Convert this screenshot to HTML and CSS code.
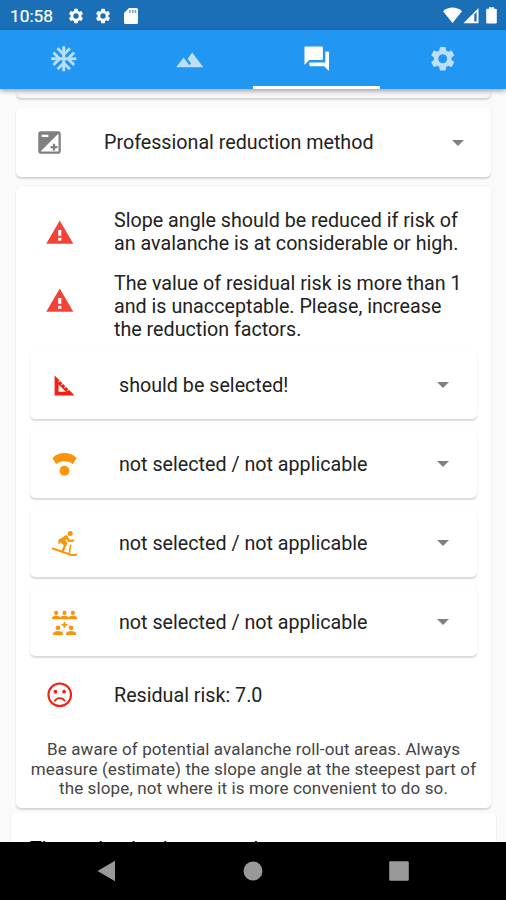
FILE: index.html
```html
<!DOCTYPE html>
<html lang="en">
<head>
<meta charset="utf-8">
<title>Avalanche risk</title>
<link rel="stylesheet" href="styles.css">
</head>
<body>
<svg class="defs" aria-hidden="true">
  <symbol id="gear" viewBox="0 0 24 24"><path d="M19.14 12.94c.04-.3.06-.61.06-.94s-.02-.64-.07-.94l2.03-1.58a.49.49 0 0 0 .12-.61l-1.92-3.32a.49.49 0 0 0-.59-.22l-2.39.96a7 7 0 0 0-1.62-.94l-.36-2.54a.48.48 0 0 0-.48-.41h-3.84a.48.48 0 0 0-.47.41l-.36 2.54c-.59.24-1.13.57-1.62.94l-2.39-.96a.48.48 0 0 0-.59.22L2.74 8.87a.48.48 0 0 0 .12.61l2.03 1.58c-.05.3-.09.63-.09.94s.02.64.07.94l-2.03 1.58a.49.49 0 0 0-.12.61l1.92 3.32c.12.22.37.29.59.22l2.39-.96c.5.38 1.03.7 1.62.94l.36 2.54c.05.24.24.41.48.41h3.84c.24 0 .44-.17.47-.41l.36-2.54a7 7 0 0 0 1.62-.94l2.39.96c.22.08.47 0 .59-.22l1.92-3.32a.48.48 0 0 0-.12-.61zM12 15.600a3.600 3.600 0 1 1 0-7.200 3.600 3.600 0 0 1 0 7.200z"/></symbol>
  <symbol id="warn" viewBox="0 0 24 24"><path d="M1 21h22L12 2zm12.300-2.500h-2.600v-2.400h2.600zm0-4h-2.600v-4.800h2.600z"/></symbol>
  <symbol id="person" viewBox="0 0 8 8"><circle cx="4" cy="2" r="2"/><path d="M-.2 8V7C-.2 5.500 2 4.700 4 4.700s4.200.8 4.200 2.300v1z"/></symbol>
</svg>
<div class="screen">
  <header class="status">
    <span class="clock">10:58</span>
    <svg class="s-gear"><use href="#gear"/></svg>
    <svg class="s-gear"><use href="#gear"/></svg>
    <svg class="s-sd" viewBox="0 0 14 16"><path d="M5 0h7.500A1.500 1.500 0 0 1 14 1.500v13a1.500 1.500 0 0 1-1.500 1.500h-11A1.500 1.500 0 0 1 0 14.500V5z"/><path class="sd-pins" d="M5.200 2h1.500v3H5.200zM8 2h1.500v3H8zM10.700 2h1.500v3h-1.500z"/></svg>
    <svg class="s-right" viewBox="0 0 56 17"><path d="M0 4.200C5.500-.8 13.500-.8 19 4.200L9.500 16z"/><path fill-rule="evenodd" d="M20.500 16.200 35.500 1v15.200zM31.300 7.300v7.300h2.300V5z"/><path d="M46 1.800V.3h5v1.500h1.800a1 1 0 0 1 1 1v12.700a1 1 0 0 1-1 1h-8.600a1 1 0 0 1-1-1V2.800a1 1 0 0 1 1-1z"/></svg>
  </header>
  <nav class="tabs">
    <div class="tab"><svg class="icon" viewBox="0 0 24 24"><path class="flake" d="M22 11h-4.170l3.240-3.240-1.410-1.420L15 11h-2V9l4.660-4.660-1.420-1.410L13 6.170V2h-2v4.170L7.760 2.930 6.340 4.340 11 9v2H9L4.340 6.340 2.930 7.760 6.170 11H2v2h4.170l-3.240 3.240 1.410 1.420L9 13h2v2l-4.660 4.660 1.420 1.410L11 17.830V22h2v-4.170l3.240 3.240 1.420-1.410L13 15v-2h2l4.660 4.660 1.410-1.420L17.830 13H22z"/></svg></div>
    <div class="tab"><svg class="icon" viewBox="0 0 24 24"><path d="M14 6l-3.750 5 2.850 3.800-1.600 1.200C9.810 13.750 7 10 7 10l-6 8h22z" transform="translate(0 1)"/></svg></div>
    <div class="tab active"><svg class="icon" viewBox="0 0 24 24"><path d="M21 6h-2v9H6v2c0 .55.45 1 1 1h11l4 4V7c0-.55-.45-1-1-1zm-4 6V3c0-.55-.45-1-1-1H3c-.55 0-1 .45-1 1v14l4-4h10c.55 0 1-.45 1-1z"/></svg></div>
    <div class="tab"><svg class="icon"><use href="#gear"/></svg></div>
  </nav>
  <main class="content">
    <section class="card previous"></section>
    <section class="card select method">
      <svg class="icon grey" viewBox="0 0 24 24"><path d="M15 17v2h2v-2h2v-2h-2v-2h-2v2h-2v2h2zm5-15H4c-1.100 0-2 .9-2 2v16c0 1.100.9 2 2 2h16c1.100 0 2-.9 2-2V4c0-1.100-.9-2-2-2zM5 5h6v2H5V5zm15 15H4L20 4v16z"/></svg>
      <span class="label">Professional reduction method</span><i class="caret"></i>
    </section>
    <section class="card assessment">
      <div class="notice"><svg class="icon red"><use href="#warn"/></svg><p>Slope angle should be reduced if risk of<br>an avalanche is at considerable or high.</p></div>
      <div class="notice tall"><svg class="icon red"><use href="#warn"/></svg><p>The value of residual risk is more than 1<br>and is unacceptable. Please, increase<br>the reduction factors.</p></div>
      <div class="choices">
        <div class="card select"><svg class="icon vivid" viewBox="0 0 24 24"><path fill-rule="evenodd" d="M2.500 2.500 21 20.800v.7H2.500zM6.300 11V18h7z"/><path class="ticks" d="m6.200 8.700 1.500-1.500m1.300 4.300 1.500-1.500m1.300 4.300 1.500-1.500m1.300 4.300 1.500-1.500"/></svg><span class="label">should be selected!</span><i class="caret"></i></div>
        <div class="card select"><svg class="icon orange" viewBox="0 0 24 24"><circle cx="12" cy="18" r="4.700"/><path d="M.7 5.500C6.500-.4 17.500-.4 23.300 5.500q.4.500 0 1l-3.400 5.200C15.800 8 8.200 8 4.100 11.700L.7 6.500q-.4-.5 0-1z"/></svg><span class="label">not selected / not applicable</span><i class="caret"></i></div>
        <div class="card select"><svg class="icon orange" viewBox="0 0 24 24"><circle cx="17.500" cy="2.500" r="2.400"/><path class="ski" d="M.8 16.800 18 22.800q2 .7 5 0"/><path class="limb" d="M13.800 5.500 7.500 9l5.300 4.500-2.600 5.800M14.500 6.500l1.800 3 4-.2"/><path class="torso" d="m13.500 6-3.500 3 3 2.800"/><path class="pole" d="m7 8.800-.2 3M18 13.800l-1.500 7.500"/></svg><span class="label">not selected / not applicable</span><i class="caret"></i></div>
        <div class="card select"><svg class="icon orange" viewBox="0 0 24 24"><use href="#person" x="0" y="-.7" width="8" height="11"/><use href="#person" x="8" y="-.7" width="8" height="11"/><use href="#person" x="16" y="-.7" width="8" height="11"/><path d="M11.100 11.500h1.800v1.900h1.900v1.800h-1.900v1.900h-1.800v-1.900H9.200v-1.800h1.900z"/><use href="#person" x="1" y="14.800" width="9.500" height="9.200"/><use href="#person" x="13.500" y="14.800" width="9.500" height="9.200"/></svg><span class="label">not selected / not applicable</span><i class="caret"></i></div>
      </div>
      <div class="notice result"><svg class="icon vivid" viewBox="0 0 24 24"><circle class="face" cx="12" cy="12" r="9.200"/><circle cx="8.500" cy="9.500" r="1.500"/><circle cx="15.500" cy="9.500" r="1.500"/><path d="M12 14c-2.330 0-4.310 1.460-5.110 3.500h1.670a4 4 0 0 1 6.880 0h1.670A5.500 5.500 0 0 0 12 14z"/></svg><p>Residual risk: 7.0</p></div>
      <p class="advice">Be aware of potential avalanche roll-out areas. Always<br>measure (estimate) the slope angle at the steepest part of<br>the slope, not where it is more convenient to do so.</p>
    </section>
    <section class="card next">The evaluation has some lessons</section>
  </main>
  <footer class="navigation">
    <svg viewBox="0 0 22 22"><path d="M19 .8v20.400L1.500 11z"/></svg>
    <svg viewBox="0 0 22 22"><circle cx="11" cy="11" r="9.500"/></svg>
    <svg viewBox="0 0 22 22"><rect x="1.200" y="1.200" width="19.600" height="19.600" rx="1.200"/></svg>
  </footer>
</div>
</body>
</html>
```
FILE: styles.css
```css
* { box-sizing: border-box; }
body { margin: 0; font-family: Roboto, "Liberation Sans", sans-serif; color: #222; }
p { margin: 0; }
svg { display: block; flex: none; fill: currentColor; }
symbol { overflow: visible; }
.defs { position: absolute; width: 0; height: 0; }
.screen { width: 506px; height: 900px; display: flex; flex-direction: column; overflow: hidden; background: #fafafa; }
.status { height: 30px; flex: none; display: flex; align-items: center; background: #1a6fb6; color: #fff; padding: 1px 7px 0 10px; }
.clock { font-size: 17.300px; width: 57px; -webkit-text-stroke: .2px #fff; }
.s-gear { width: 18px; height: 18px; margin-right: 9px; }
.s-sd { width: 14px; height: 16px; margin-left: 3px; }
.sd-pins { fill: #6b9fce; }
.s-right { width: 56px; height: 17px; margin-left: auto; }
.tabs { height: 59px; flex: none; display: flex; background: #2196f3; box-shadow: 0 2px 5px rgba(0,0,0,.35); z-index: 1; }
.tab { flex: 1; display: flex; align-items: center; justify-content: center; color: #bce0fb; padding-top: 1px; border-bottom: 3px solid transparent; }
.tab.active { color: #fff; border-bottom-color: #fff; }
.flake { stroke: currentColor; stroke-width: .4; }
.icon { width: 29.500px; height: 29.500px; }
.content { flex: 1; min-height: 0; overflow: hidden; padding: 0 15px 0 16px; display: flex; flex-direction: column; }
.card { flex: none; border-radius: 5px; background: #fff; box-shadow: 0 1.500px 1.500px rgba(0,0,0,.14), 0 0 2px rgba(0,0,0,.04); }
.previous { height: 20px; margin-top: -11px; background: #f8f6f6; }
.select { display: flex; align-items: center; height: 68px; padding: 0 28px 0 20px; font-size: 19.700px; }
.method { margin-top: 10px; height: 69px; padding-right: 27px; }
.method .icon { width: 27px; height: 27px; }
.method .label { margin-left: 41px; }
.label { margin-left: 39.500px; white-space: nowrap; }
.caret { margin-left: auto; border: 6px solid transparent; border-top-color: #808080; border-bottom: 0; }
.assessment { margin-top: 10px; height: 621px; padding: 22px 14px 0; }
.notice { display: flex; align-items: center; padding-left: 15px; font-size: 19.700px; line-height: 23.300px; white-space: nowrap; }
.notice p { margin-left: 39.500px; }
.notice + .notice { margin-top: 16px; }
.tall .icon { margin-bottom: 11px; }
.choices { display: grid; gap: 11px; margin-top: 10px; }
.choices .icon { width: 25px; height: 25px; margin: 0 2.250px; }
.result { margin-top: 24px; }
.advice { margin-top: 30px; text-align: center; font-size: 17px; line-height: 19.700px; letter-spacing: .12px; white-space: nowrap; color: #444; }
.next { height: 60px; margin: 5px -5px 0; padding: 24px 19px; font-size: 19.700px; line-height: 25px; color: #000; }
.grey { color: #808080; }
.red { color: #f44336; }
.vivid { color: #f31f12; }
.orange { color: #fb930b; }
.ticks { fill: none; stroke: #fff; stroke-width: 1; }
.face { fill: none; stroke: currentColor; stroke-width: 1.700; }
.ski, .limb, .torso, .pole { fill: none; stroke: currentColor; stroke-width: 1.800; stroke-linecap: round; stroke-linejoin: round; }
.limb { stroke-width: 2.200; }
.torso { stroke-width: 3.500; }
.pole { stroke-width: 1.500; }
.navigation { height: 58px; flex: none; background: #000; color: #999; display: grid; grid-template-columns: repeat(3, 22px); justify-content: center; align-items: center; gap: 124px; }
.navigation svg { width: 22px; height: 22px; }
```
